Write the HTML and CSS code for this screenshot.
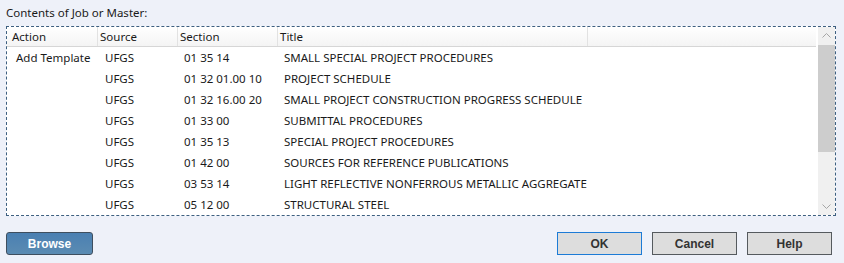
FILE: index.html
```html
<!DOCTYPE html>
<html lang="en">
<head>
    <meta charset="UTF-8">
    <title>Contents of Job or Master</title>
    <link rel="stylesheet" href="styles.css">
</head>
<body>

    <!-- Label -->
    <div class="caption">Contents of Job or Master:</div>

    <!-- Grid -->
    <div class="grid">
        <div class="grid-body">
            <div class="grid-header">
                <div class="hcell col-action">Action</div>
                <div class="hcell col-source">Source</div>
                <div class="hcell col-section">Section</div>
                <div class="hcell col-title">Title</div>
                <div class="hcell col-rest"></div>
            </div>
            <div class="row">
                <div class="cell col-action first">Add Template</div>
                <div class="cell col-source">UFGS</div>
                <div class="cell col-section">01 35 14</div>
                <div class="cell col-title">SMALL SPECIAL PROJECT PROCEDURES</div>
            </div>
            <div class="row">
                <div class="cell col-action first"></div>
                <div class="cell col-source">UFGS</div>
                <div class="cell col-section">01 32 01.00 10</div>
                <div class="cell col-title">PROJECT SCHEDULE</div>
            </div>
            <div class="row">
                <div class="cell col-action first"></div>
                <div class="cell col-source">UFGS</div>
                <div class="cell col-section">01 32 16.00 20</div>
                <div class="cell col-title">SMALL PROJECT CONSTRUCTION PROGRESS SCHEDULE</div>
            </div>
            <div class="row">
                <div class="cell col-action first"></div>
                <div class="cell col-source">UFGS</div>
                <div class="cell col-section">01 33 00</div>
                <div class="cell col-title">SUBMITTAL PROCEDURES</div>
            </div>
            <div class="row">
                <div class="cell col-action first"></div>
                <div class="cell col-source">UFGS</div>
                <div class="cell col-section">01 35 13</div>
                <div class="cell col-title">SPECIAL PROJECT PROCEDURES</div>
            </div>
            <div class="row">
                <div class="cell col-action first"></div>
                <div class="cell col-source">UFGS</div>
                <div class="cell col-section">01 42 00</div>
                <div class="cell col-title">SOURCES FOR REFERENCE PUBLICATIONS</div>
            </div>
            <div class="row">
                <div class="cell col-action first"></div>
                <div class="cell col-source">UFGS</div>
                <div class="cell col-section">03 53 14</div>
                <div class="cell col-title">LIGHT REFLECTIVE NONFERROUS METALLIC AGGREGATE</div>
            </div>
            <div class="row">
                <div class="cell col-action first"></div>
                <div class="cell col-source">UFGS</div>
                <div class="cell col-section">05 12 00</div>
                <div class="cell col-title">STRUCTURAL STEEL</div>
            </div>
        </div>

        <!-- Vertical scrollbar -->
        <div class="scrollbar">
            <div class="arrow">
                <svg width="9" height="5" viewBox="0 0 9 5"><path d="M0.5 4.5 L4.5 0.5 L8.5 4.5" fill="none" stroke="#a6a6a6" stroke-width="1"/></svg>
            </div>
            <div class="track">
                <div class="thumb"></div>
            </div>
            <div class="arrow">
                <svg width="9" height="5" viewBox="0 0 9 5"><path d="M0.5 0.5 L4.5 4.5 L8.5 0.5" fill="none" stroke="#a6a6a6" stroke-width="1"/></svg>
            </div>
        </div>
    </div>

    <!-- Buttons -->
    <div class="buttons">
        <button class="btn browse">Browse</button>
        <div class="right-buttons">
            <button class="btn default">OK</button>
            <button class="btn">Cancel</button>
            <button class="btn">Help</button>
        </div>
    </div>

</body>
</html>
```

FILE: styles.css
```css
body {
    margin: 0;
    padding: 0;
    background-color: #eef1f9;
    font-family: "Noto Sans", "Open Sans", sans-serif;
    font-size: 11.5px;
    color: #1a1a1a;
    width: 844px;
    height: 263px;
    overflow: hidden;
}
.caption {
    padding: 5px 0 0 6px;
    height: 26px;
    line-height: 16px;
    box-sizing: border-box;
}

/* Grid */
.grid {
    display: flex;
    margin-left: 6px;
    width: 830px;
    height: 190px;
    box-sizing: border-box;
    border: 1px dashed #3d5f80;
    background-color: #fff;
}
.grid-body {
    width: 811px;
}
.grid-header {
    display: flex;
    height: 20px;
    width: 809px;
    box-sizing: border-box;
    background: linear-gradient(#ffffff, #f4f4f4);
    border-bottom: 1px solid #d6d6d6;
}
.hcell {
    line-height: 19px;
    padding-left: 2px;
    box-sizing: border-box;
    border-right: 1px solid #e2e2e2;
    white-space: nowrap;
}
.hcell.col-action {
    padding-left: 5px;
}
.hcell.col-rest {
    border-right: none;
    flex: 1;
}
.col-action { width: 91px; }
.col-source { width: 80px; }
.col-section { width: 100px; }
.col-title { width: 310px; }

.row {
    display: flex;
    height: 21px;
    line-height: 21px;
}
.cell {
    padding-left: 6px;
    box-sizing: border-box;
    white-space: nowrap;
    overflow: hidden;
}
.cell.first {
    padding-left: 9px;
}
.cell.col-source {
    padding-left: 7px;
}

/* Scrollbar */
.scrollbar {
    width: 17px;
    display: flex;
    flex-direction: column;
    background-color: #f0f0f0;
}
.arrow {
    height: 17px;
    display: flex;
    align-items: center;
    justify-content: center;
}
.track {
    flex: 1;
}
.thumb {
    height: 107px;
    margin-top: 1px;
    background-color: #cdcdcd;
}

/* Buttons */
.buttons {
    display: flex;
    justify-content: space-between;
    padding: 16px 12px 0 6px;
}
.right-buttons {
    display: flex;
    gap: 10px;
}
.btn {
    width: 85px;
    height: 23px;
    padding: 0;
    font-family: "Liberation Sans", Arial, sans-serif;
    font-size: 12px;
    font-weight: bold;
    color: #333;
    background-color: #dddddd;
    border: 1px solid #555a5e;
    border-radius: 0;
}
.btn.default {
    border-color: #1c7bd6;
}
.btn.browse {
    width: 87px;
    color: #fff;
    border: 1px solid #3e4e5e;
    border-radius: 3px;
    background: linear-gradient(#4a80b2, #5b8bb2);
}
```
